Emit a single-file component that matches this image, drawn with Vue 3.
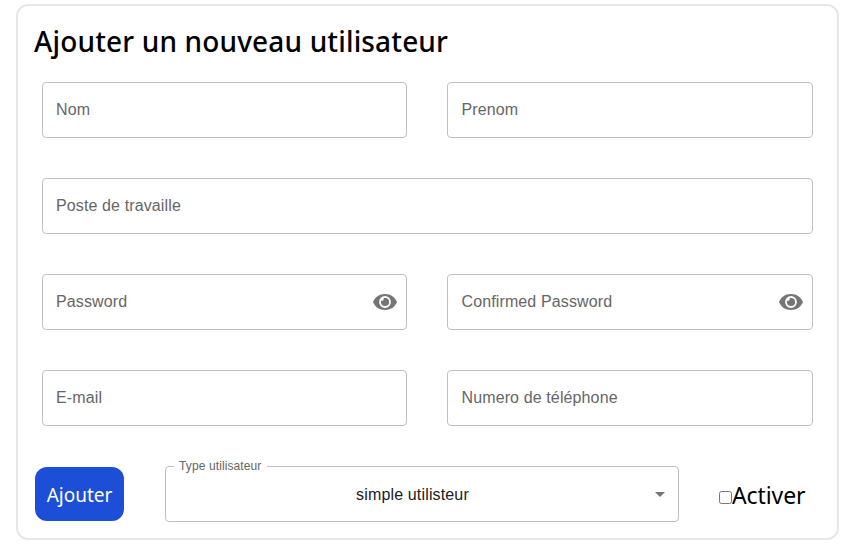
<script setup>
import { ref } from 'vue'

const rows = [
  [{ label: 'Nom' }, { label: 'Prenom' }],
  [{ label: 'Poste de travaille' }],
  [{ label: 'Password', secret: true }, { label: 'Confirmed Password', secret: true }],
  [{ label: 'E-mail' }, { label: 'Numero de téléphone' }],
]
const active = ref(false)
</script>

<template>
  <form class="panel" @submit.prevent>
    <h1 class="title">Ajouter un nouveau utilisateur</h1>
    <div class="rows">
      <div v-for="(row, i) in rows" :key="i" class="row" :class="{ split: row.length > 1 }">
        <div v-for="field in row" :key="field.label" class="field">
          <span class="label">{{ field.label }}</span>
          <svg v-if="field.secret" class="eye" viewBox="0 0 24 24">
            <path fill-rule="evenodd" d="M12 4C6.200 4 2.100 7 0 12c2.100 5 6.200 8 12 8s9.900-3 12-8c-2.100-5-6.200-8-12-8zM12 6.100a5.900 5.900 0 1 1 0 11.800a5.900 5.900 0 0 1 0-11.800z" />
            <path d="M12 7.900a4.100 4.100 0 1 1-4.100 4.100c0-.5.100-1 .3-1.500a1.700 1.700 0 0 0 2.300-2.300c.5-.2 1-.3 1.500-.3z" />
          </svg>
        </div>
      </div>
    </div>
    <div class="actions">
      <button class="submit">Ajouter</button>
      <fieldset class="select">
        <legend>Type utilisateur</legend>
        <span class="value">simple utilisteur</span>
        <svg class="arrow" viewBox="0 0 24 24"><path d="M7 10l5 5 5-5z" /></svg>
      </fieldset>
      <label class="active"><input v-model="active" type="checkbox" /><span class="active-text">Activer</span></label>
    </div>
  </form>
</template>

<style>
body {
  background: #fff;
}
</style>

<style scoped>
.panel {
  box-sizing: border-box;
  width: 823px;
  height: 536px;
  margin: 4px 0 0 16px;
  border: 2px solid #e5e7eb;
  border-radius: 12px;
  padding: 15px 16px 0;
  font-family: "Noto Sans", "Open Sans", sans-serif;
  color: #000;
}
.title {
  margin: 0;
  height: 41px;
  line-height: 40px;
  font-size: 28px;
  font-weight: 500;
  letter-spacing: 0.15px;
  white-space: nowrap;
}
.rows {
  display: flex;
  flex-direction: column;
  gap: 40px;
  padding: 20px 8px 0;
}
.row {
  display: grid;
  grid-template-columns: 1fr;
  column-gap: 40px;
}
.row.split {
  grid-template-columns: 365px 366px;
}
.field {
  box-sizing: border-box;
  display: flex;
  align-items: center;
  justify-content: space-between;
  height: 56px;
  padding: 0 9px 0 13px;
  border: 1px solid #c0c0c0;
  border-radius: 4px;
}
.field:nth-child(2) {
  padding-left: 13.5px;
}
.label {
  padding-bottom: 2px;
  font: 16px/23px "Liberation Sans", Arial, sans-serif;
  letter-spacing: 0.12px;
  color: #666;
  white-space: nowrap;
}
.eye {
  width: 24px;
  height: 24px;
  fill: #757575;
}
.actions {
  display: flex;
  align-items: flex-start;
  margin-top: 40px;
  padding-left: 1px;
}
.submit {
  width: 89px;
  height: 54px;
  margin: 1px 41px 0 0;
  padding: 2px 0 0;
  border: 0;
  border-radius: 12px;
  background: #1d4ed8;
  color: #fff;
  font: 19px/28px "Noto Sans", "Open Sans", sans-serif;
}
.select {
  position: relative;
  box-sizing: border-box;
  display: flex;
  align-items: center;
  justify-content: center;
  width: 514px;
  height: 62px;
  margin: -6px 40px 0 0;
  padding: 0 19px 0 0;
  border: 1px solid #c0c0c0;
  border-radius: 4px;
}
.select legend {
  margin-left: 8px;
  padding: 0 5.5px 0 5px;
  height: 12px;
  font: 12px/12px "Liberation Sans", Arial, sans-serif;
  letter-spacing: 0.11px;
  color: #666;
}
.value {
  padding-bottom: 4px;
  font: 16px/23px "Liberation Sans", Arial, sans-serif;
  letter-spacing: 0.15px;
  color: #212121;
}
.arrow {
  position: absolute;
  right: 6px;
  top: 10px;
  width: 24px;
  height: 24px;
  fill: #757575;
}
.active {
  display: flex;
  align-items: center;
  height: 60px;
  font-size: 23px;
  letter-spacing: -0.1px;
}
.active-text {
  padding-bottom: 2px;
}
.active input {
  width: 13px;
  height: 13px;
  margin: 2px 0 0;
}
</style>
